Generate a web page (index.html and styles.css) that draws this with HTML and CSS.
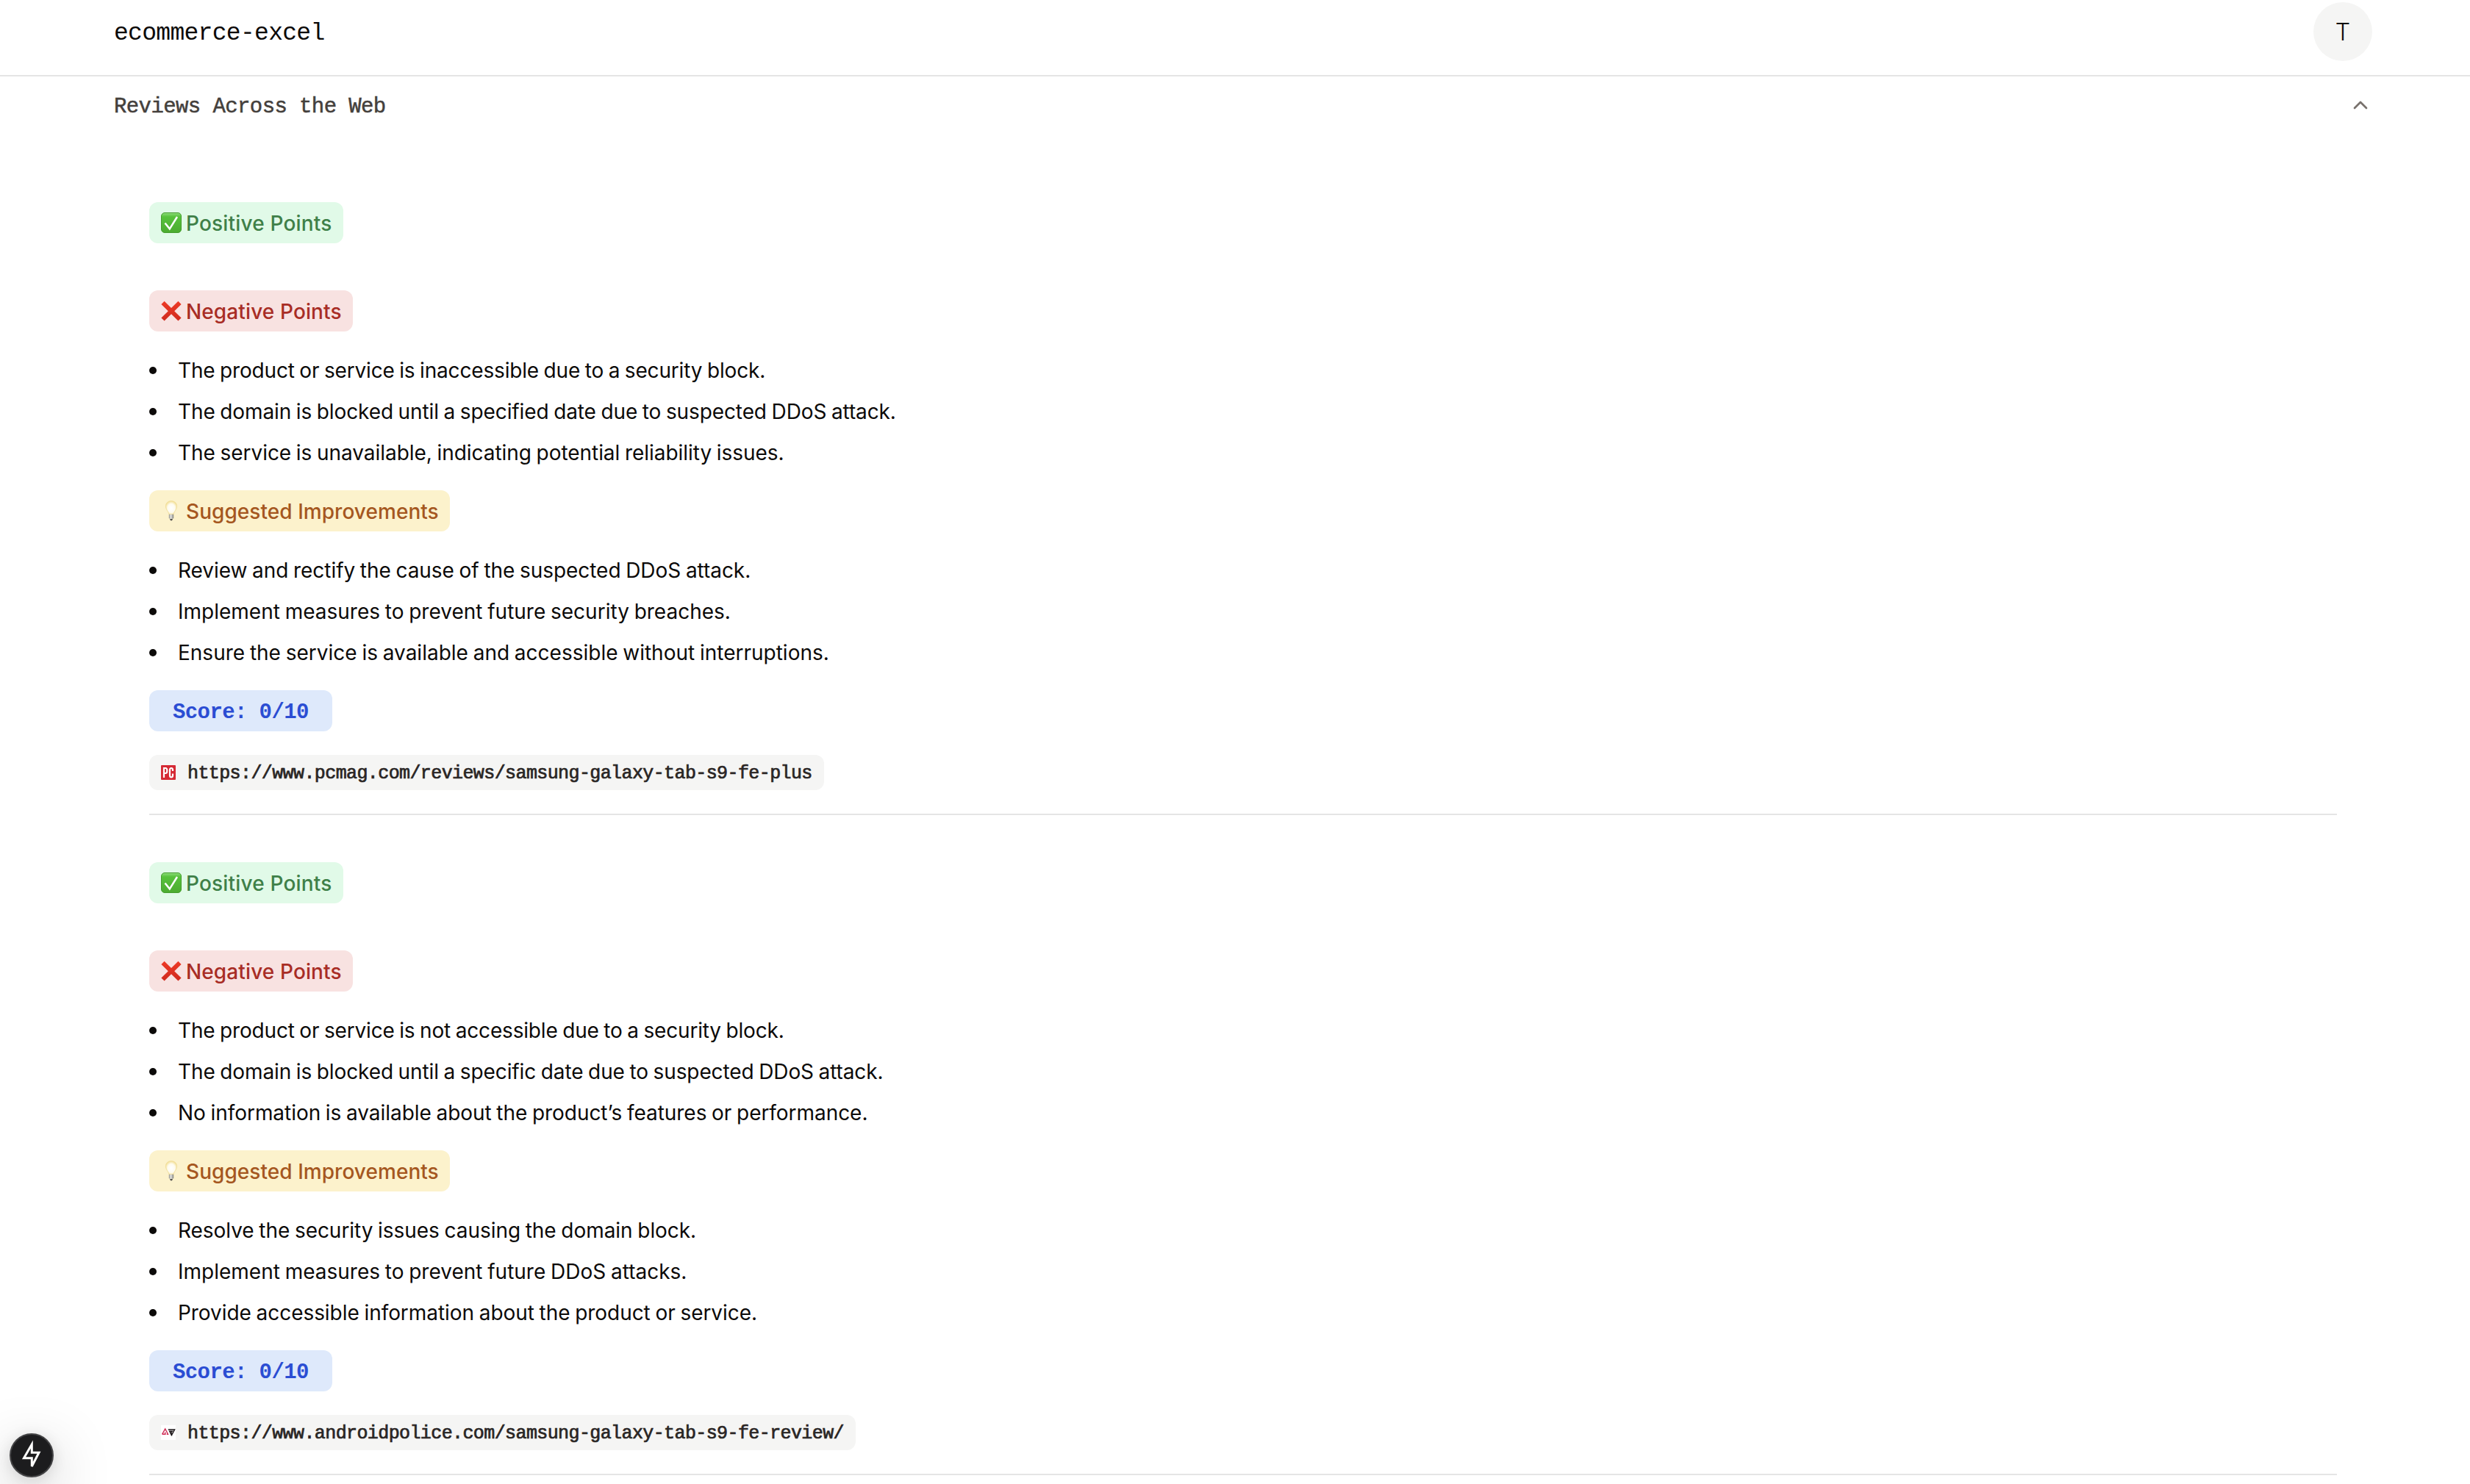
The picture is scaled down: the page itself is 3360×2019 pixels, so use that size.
FILE: index.html
```html
<!DOCTYPE html>
<html lang="en">
<head>
<meta charset="utf-8">
<title>ecommerce-excel</title>
<link rel="stylesheet" href="styles.css">
</head>
<body>
<svg class="defs" width="0" height="0" aria-hidden="true">
  <defs>
    <linearGradient id="green" x1="0" y1="0" x2="0" y2="1"><stop offset="0" stop-color="#8fdc7c"/><stop offset=".2" stop-color="#57c23c"/><stop offset="1" stop-color="#4cab30"/></linearGradient>
    <linearGradient id="red" x1="0" y1="0" x2="0" y2="1"><stop offset="0" stop-color="#ee3a26"/><stop offset="1" stop-color="#cf2a1e"/></linearGradient>
    <radialGradient id="glow" cx=".5" cy=".55" r=".55"><stop offset="0" stop-color="#ffffff"/><stop offset=".6" stop-color="#fefbee"/><stop offset="1" stop-color="#f3df94"/></radialGradient>
    <linearGradient id="metal"><stop offset="0" stop-color="#8f8f8b"/><stop offset=".4" stop-color="#e4e4e0"/><stop offset="1" stop-color="#81817c"/></linearGradient>
    <symbol id="check" viewBox="0 0 28 28"><rect x=".5" y=".5" width="27" height="27" rx="4.5" fill="url(#green)" stroke="#459d2e"/><path d="M5.5 14.5 11.8 22.3 22 6" fill="none" stroke="#fff" stroke-width="2.5"/></symbol>
    <symbol id="cross" viewBox="0 0 28 28"><path d="M4.6.7 14 10.1 23.4.7 27.6 4.9 18.2 14.2 27.6 23.4 23.4 27.6 14 18.3 4.6 27.6.4 23.4 9.8 14.2.4 4.9Z" fill="url(#red)"/></symbol>
    <symbol id="bulb" viewBox="0 0 28 28"><path d="M10.800 18.500C10.300 14.500 6.400 12.800 6.400 7.800 6.400 3.600 9.600.6 14 .6s7.600 3 7.600 7.200c0 5-3.900 6.700-4.400 10.700Z" fill="url(#glow)" stroke="#efdc96" stroke-width=".8"/><path d="M10.800 18.800h6.400v5.400q-3.200 1.500-6.400 0Z" fill="url(#metal)"/><path d="M12 25h4l-1 2.200h-2Z" fill="#55544f"/></symbol>
  </defs>
</svg>

<header class="header">
  <div class="brand">ecommerce-excel</div>
  <div class="avatar">T</div>
</header>

<main class="page">
  <div class="accordion-head">
    <h2 class="accordion-title">Reviews Across the Web</h2>
    <svg class="chevron" viewBox="0 0 24 24"><path d="m18 15-6-6-6 6"/></svg>
  </div>

  <div class="reviews">
    <section class="review">
      <div class="pill positive"><svg><use href="#check"/></svg>Positive Points</div>
      <div class="pill negative"><svg><use href="#cross"/></svg>Negative Points</div>
      <ul class="points">
        <li class="tight">The product or service is inaccessible due to a security block.</li>
        <li class="snug">The domain is blocked until a specified date due to suspected DDoS attack.</li>
        <li class="near">The service is unavailable, indicating potential reliability issues.</li>
      </ul>
      <div class="pill suggested"><svg><use href="#bulb"/></svg>Suggested Improvements</div>
      <ul class="points">
        <li class="near">Review and rectify the cause of the suspected DDoS attack.</li>
        <li>Implement measures to prevent future security breaches.</li>
        <li>Ensure the service is available and accessible without interruptions.</li>
      </ul>
      <div class="score">Score: 0/10</div>
      <a class="source">
        <svg class="favicon" viewBox="0 0 20 20"><rect width="20" height="20" rx="1" fill="#d52a35"/><path d="M4 17V4h2.300q2 0 2 3.500t-2 3.500H4M16 8V6.500q0-2.500-2-2.500t-2 2.500v7.500q0 2.500 2 2.500t2-2.500v-2.500" fill="none" stroke="#fff" stroke-width="2.200"/></svg>
        <span>https://www.pcmag.com/reviews/samsung-galaxy-tab-s9-fe-plus</span>
      </a>
    </section>

    <section class="review">
      <div class="pill positive"><svg><use href="#check"/></svg>Positive Points</div>
      <div class="pill negative"><svg><use href="#cross"/></svg>Negative Points</div>
      <ul class="points">
        <li class="tight">The product or service is not accessible due to a security block.</li>
        <li class="snug">The domain is blocked until a specific date due to suspected DDoS attack.</li>
        <li class="near">No information is available about the product’s features or performance.</li>
      </ul>
      <div class="pill suggested"><svg><use href="#bulb"/></svg>Suggested Improvements</div>
      <ul class="points">
        <li class="near">Resolve the security issues causing the domain block.</li>
        <li>Implement measures to prevent future DDoS attacks.</li>
        <li class="near">Provide accessible information about the product or service.</li>
      </ul>
      <div class="score">Score: 0/10</div>
      <a class="source">
        <svg class="favicon" viewBox="0 0 20 20"><rect width="20" height="20" fill="#fff"/><path d="M1.600 12.300 5.700 5l3.800 7.300H7.800M1.600 12.300h4.300L5.600 9.500" fill="none" stroke="#cf2b55" stroke-width="1.400"/><path d="M9.800 6h8.800l-3.600 6.500-1.300-2.300 1.600-2h-3.600l3 6.300" fill="none" stroke="#1b1517" stroke-width="1.400"/></svg>
        <span>https://www.androidpolice.com/samsung-galaxy-tab-s9-fe-review/</span>
      </a>
    </section>
  </div>
</main>

<div class="indicator">
  <svg viewBox="0 0 60 60"><path d="M30.300 15v11.300h9.700L30.300 45V33.700H19.500Z"/></svg>
</div>
</body>
</html>
```
FILE: styles.css
```css
* { box-sizing: border-box; }

body {
  margin: 0;
  height: 2019px;
  overflow: hidden;
  background: #fff;
  color: #0c0a09;
  font-family: Inter, "Liberation Sans", sans-serif;
  font-size: 28px;
}

.defs { display: block; }

.header {
  display: flex;
  align-items: center;
  justify-content: space-between;
  height: 104px;
  padding: 3px 133px 19px 155px;
  border-bottom: 2px solid #e5e5e5;
}

.brand {
  padding-top: 5px;
  font: 33px/40px "Liberation Mono", monospace;
  letter-spacing: -0.7px;
}

.avatar {
  display: grid;
  place-items: center;
  width: 80px;
  height: 80px;
  border-radius: 50%;
  background: #f5f5f4;
  font-size: 32px;
  font-weight: 300;
}

.accordion-head {
  display: flex;
  align-items: center;
  justify-content: space-between;
  height: 78px;
  padding: 0 133px 0 155px;
}

.accordion-title {
  margin: 0;
  padding-top: 5px;
  font: 29px/36px "Liberation Mono", monospace;
  letter-spacing: -0.6px;
  color: #44403c;
  -webkit-text-stroke: 0.5px #44403c;
}

.chevron {
  width: 32px;
  height: 32px;
  fill: none;
  stroke: #78716c;
  stroke-width: 2;
  stroke-linecap: round;
  stroke-linejoin: round;
}

.reviews { padding: 29px 181px 0 203px; }

.review {
  display: flex;
  flex-direction: column;
  align-items: flex-start;
  padding: 64px 0 32px;
  border-bottom: 2px solid #e5e5e5;
}

.pill {
  display: flex;
  align-items: center;
  gap: 6px;
  height: 56px;
  padding: 2px 15px 0 16px;
  border-radius: 12px;
  font-weight: 500;
  white-space: nowrap;
}

.pill svg {
  width: 28px;
  height: 28px;
  margin-top: -2px;
}

.positive {
  margin-bottom: 64px;
  background: #e1fae8;
  color: #3f8048;
  letter-spacing: 0.18px;
}

.negative {
  background: #f8e2e1;
  color: #a82d25;
  letter-spacing: 0.12px;
}

.suggested {
  background: #fcf2cc;
  color: #a5571f;
  letter-spacing: 0.05px;
}

.points {
  margin: 25px 0 23px;
  padding: 0;
  list-style: none;
  line-height: 56px;
  word-spacing: -1.1px;
  white-space: nowrap;
}

.points li { display: flex; align-items: center; }

.points li::before {
  content: "";
  width: 10px;
  height: 10px;
  margin-right: 29px;
  border-radius: 50%;
  background: #0c0a09;
}

.tight { letter-spacing: -0.17px; }
.snug { letter-spacing: -0.11px; }
.near { letter-spacing: -0.05px; }

.score {
  height: 56px;
  padding: 3px 32px 0;
  border-radius: 12px;
  background: #dee9fb;
  color: #2b4dd3;
  font: bold 29px/56px "Liberation Mono", monospace;
  letter-spacing: -0.6px;
}

.source {
  display: flex;
  align-items: center;
  gap: 16px;
  height: 48px;
  margin-top: 32px;
  padding: 0 16px;
  border-radius: 12px;
  background: #f5f5f4;
  color: #292524;
  font: 25px/44px "Liberation Mono", monospace;
  letter-spacing: -0.6px;
  -webkit-text-stroke: 0.7px #292524;
}

.source span { padding-top: 3px; }

.favicon { width: 20px; height: 20px; }

.indicator {
  position: absolute;
  left: 13px;
  top: 1950px;
  width: 60px;
  height: 60px;
  border: 2px solid #434345;
  border-radius: 50%;
  background: #1c1c1e;
  box-shadow: 0 22px 80px rgba(0, 0, 0, 0.25), 0 4px 20px rgba(0, 0, 0, 0.12);
}

.indicator svg {
  display: block;
  width: 60px;
  height: 60px;
  margin: -2px;
  fill: none;
  stroke: #fff;
  stroke-width: 3;
}
```
